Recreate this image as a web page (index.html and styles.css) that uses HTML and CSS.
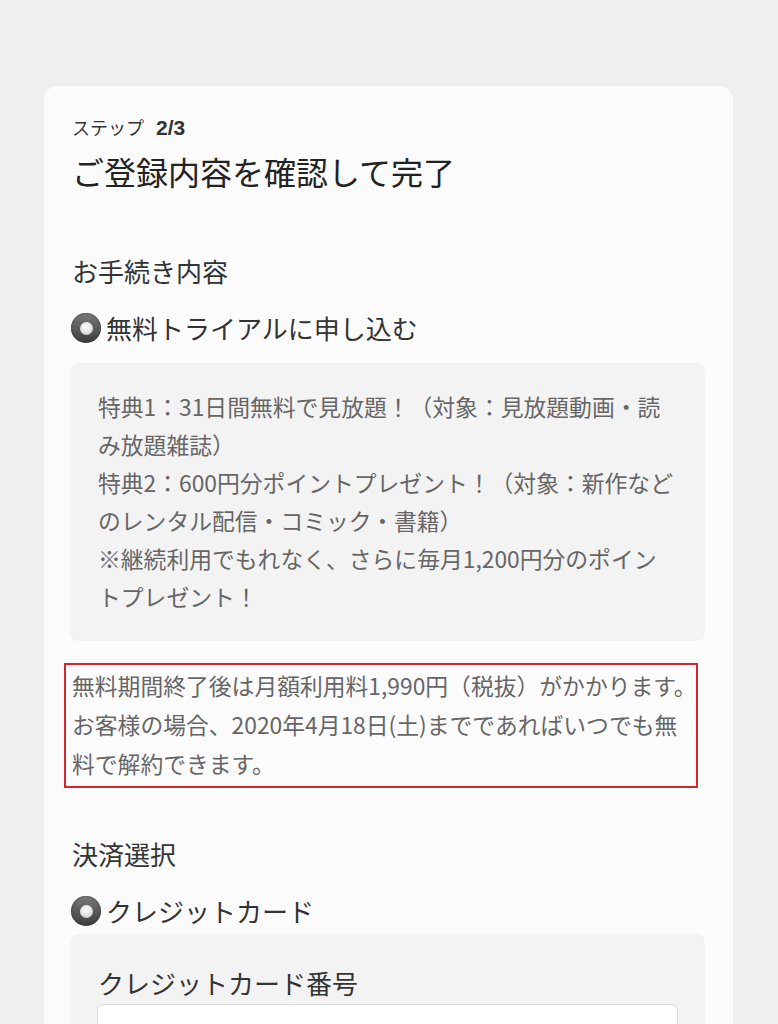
FILE: index.html
```html
<!DOCTYPE html>
<html lang="ja">
<head>
    <meta charset="UTF-8">
    <meta name="viewport" content="width=device-width, initial-scale=1.0">
    <title>ご登録内容を確認して完了</title>
    <link rel="stylesheet" href="styles.css">
</head>
<body>
    <div class="card">
        <div class="step">ステップ<b>2/3</b></div>
        <h1 class="title">ご登録内容を確認して完了</h1>

        <h2 class="section">お手続き内容</h2>
        <label class="radio-row">
            <span class="radio"></span>無料トライアルに申し込む
        </label>
        <div class="panel">
            <p class="benefits">
                特典1：31日間無料で見放題！（対象：見放題動画・読<br>み放題雑誌）<br>
                特典2：600円分ポイントプレゼント！（対象：新作など<br>のレンタル配信・コミック・書籍）<br>
                ※継続利用でもれなく、さらに毎月1,200円分のポイン<br>トプレゼント！
            </p>
        </div>
        <p class="notice">
            無料期間終了後は月額利用料1,990円（税抜）がかかります。<br>お客様の場合、2020年4月18日(土)までであればいつでも無<br>料で解約できます。
        </p>

        <h2 class="section section-pay">決済選択</h2>
        <label class="radio-row">
            <span class="radio"></span>クレジットカード
        </label>
        <div class="panel panel-card">
            <div class="field-label">クレジットカード番号</div>
            <input type="text" class="field-input">
        </div>
    </div>
</body>
</html>
```

FILE: styles.css
```css
body {
    margin: 0;
    background-color: #efefef;
    font-family: "Noto Sans CJK JP", "Noto Sans", sans-serif;
    color: #333;
}
.card {
    margin: 86px 45px 0 44px;
    padding: 28px 28px 40px 28px;
    background-color: #fbfbfb;
    border-radius: 14px;
    min-height: 1000px;
}
.step {
    font-size: 18px;
    line-height: 26px;
    color: #333;
}
.step b {
    margin-left: 12px;
    font-family: "Liberation Sans", sans-serif;
    font-size: 21px;
}
.title {
    margin: 8px 0 0 0;
    font-size: 32px;
    line-height: 44px;
    font-weight: normal;
    color: #222;
}
.section {
    margin: 60px 0 0 0;
    font-size: 26px;
    line-height: 36px;
    font-weight: normal;
    color: #333;
}
.section-pay {
    margin-top: 48px;
}
.radio-row {
    display: flex;
    align-items: center;
    gap: 5px;
    margin-top: 21px;
    font-size: 26px;
    line-height: 36px;
    color: #333;
}
.radio {
    display: flex;
    align-items: center;
    justify-content: center;
    width: 30px;
    height: 30px;
    margin-left: -1px;
    border-radius: 50%;
    background: linear-gradient(#7a7a7a, #3c3c3c);
    box-shadow: inset 0 0 2px #222;
}
.radio::after {
    content: "";
    width: 13px;
    height: 13px;
    border-radius: 50%;
    background: radial-gradient(circle at 45% 35%, #ffffff, #c8c8c8);
}
.panel {
    margin: 17px 0 0 -2px;
    padding: 25px 28px;
    background-color: #f3f3f3;
    border-radius: 8px;
}
.benefits {
    margin: 0;
    font-size: 22.8px;
    line-height: 38px;
    color: #666;
    white-space: nowrap;
}
.notice {
    margin: 22px 7px 0 -8px;
    padding: 1px 0 3px 6px;
    border: 2px solid #d3262f;
    font-size: 22.8px;
    line-height: 39px;
    color: #666;
    white-space: nowrap;
}
.panel-card {
    margin-top: 5px;
    padding: 31px 26px 0 28px;
    min-height: 120px;
}
.field-label {
    font-size: 26px;
    line-height: 36px;
    color: #333;
}
.field-input {
    display: block;
    box-sizing: border-box;
    width: 100%;
    height: 50px;
    margin-top: 3px;
    margin-left: -1px;
    border: 1px solid #dcdcdc;
    border-radius: 6px;
    background-color: #fff;
}
```
